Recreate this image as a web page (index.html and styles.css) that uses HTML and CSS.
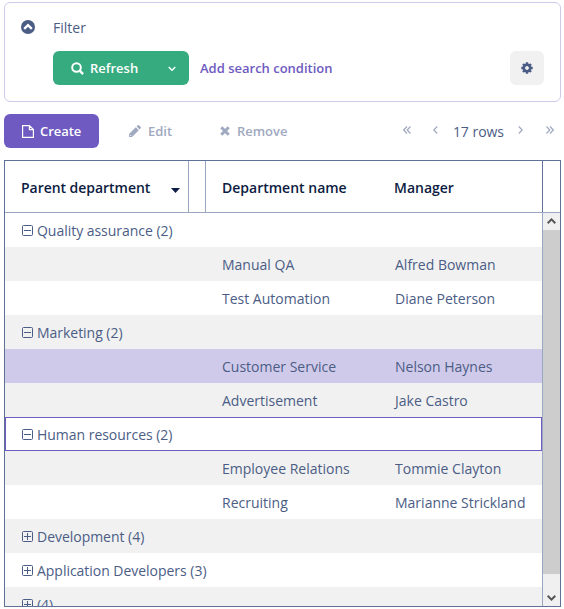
FILE: index.html
```html
<!DOCTYPE html>
<html lang="en">
<head>
<meta charset="utf-8">
<title>Departments</title>
<link rel="stylesheet" href="styles.css">
</head>
<body>
<svg class="defs" width="0" height="0">
  <symbol id="minus" viewBox="0 0 11 11"><rect x=".5" y=".5" width="10" height="10" rx="1"/><path d="M2 5.5h7"/></symbol>
  <symbol id="plus" viewBox="0 0 11 11"><rect x=".5" y=".5" width="10" height="10" rx="1"/><path d="M2 5.5h7M5.5 2v7"/></symbol>
</svg>
<section class="filter">
  <div class="filter-head">
    <svg class="collapse" width="14" height="14" viewBox="0 0 14 14"><circle cx="7" cy="7" r="7" fill="#4b5d85"/><path d="M3.200 8.900 7 5.100l3.800 3.800" fill="none" stroke="#fff" stroke-width="2.4"/></svg>
    <span class="filter-title">Filter</span>
  </div>
  <div class="filter-actions">
    <button class="refresh">
      <svg width="13" height="13" viewBox="0 0 13 13" fill="none" stroke="#fff" stroke-width="2"><circle cx="5.5" cy="5.5" r="4.3"/><path d="m8.6 8.6 3.5 3.5" stroke-width="2.3"/></svg>
      <span class="refresh-label">Refresh</span>
      <svg class="caret" width="8" height="6" viewBox="0 0 8 6" fill="none" stroke="#fff" stroke-width="1.3"><path d="m.7 1 3.3 3.3L7.300 1"/></svg>
    </button>
    <a class="add">Add search condition</a>
    <button class="gear"><svg width="12" height="12" viewBox="-6 -6 12 12" fill="none" stroke="#4b5d85"><circle r="3.2" stroke-width="2.6"/><path stroke-width="2.4" d="M0-5.700V-3.500M0 5.700V3.500M-5.700 0H-3.500M5.700 0H3.500M-4-4l1.500 1.500M4 4 2.500 2.500M-4 4l1.500-1.500M4-4 2.500-2.500"/></svg></button>
  </div>
</section>
<div class="toolbar">
  <button class="create"><svg width="12" height="13" viewBox="0 0 12 13" fill="none" stroke="#fff" stroke-width="1.2"><path d="M.6.6h6.800l4 4v7.800H.6zM7.400.6v4h4"/></svg>Create</button>
  <span class="tool edit"><svg width="12" height="12" viewBox="0 0 12 12" fill="#9fa9bf"><path d="M0 12V9l6.800-6.800 3 3L3 12zM7.600 1.400 8.700.3q.6-.5 1.200 0l1.800 1.800q.5.600 0 1.200l-1.100 1.100z"/><path d="M1 9.800 2.200 11" stroke="#fff" stroke-width=".9"/></svg>Edit</span>
  <span class="tool remove"><svg width="10" height="10" viewBox="0 0 10 10" fill="none" stroke="#9fa9bf" stroke-width="3"><path d="m1.300 1.300 7.400 7.400M8.700 1.300 1.300 8.700"/></svg>Remove</span>
  <div class="pager">
    <svg width="8" height="8" viewBox="0 0 8 8"><path d="M4 .5.700 4 4 7.500M7.500.5 4.200 4l3.300 3.500"/></svg>
    <svg class="prev" width="5" height="8" viewBox="0 0 5 8"><path d="M4.200.5.800 4l3.400 3.500"/></svg>
    <span class="count">17 rows</span>
    <svg class="next" width="5" height="8" viewBox="0 0 5 8"><path d="M.8.500 4.200 4 .8 7.500"/></svg>
    <svg width="8" height="8" viewBox="0 0 8 8"><path d="M.5.500 3.800 4 .5 7.500M4 .5 7.300 4 4 7.500"/></svg>
  </div>
</div>
<div class="table">
  <div class="thead">
    <div class="th parent">Parent department<svg width="9" height="5" viewBox="0 0 9 5"><path d="M0 0h9L4.500 5z" fill="#0d1c42"/></svg></div>
    <div class="th spacer"></div>
    <div class="th name">Department name</div>
    <div class="th manager">Manager</div>
    <div class="th corner"></div>
  </div>
  <div class="tbody">
    <div class="rows">
      <div class="row"><svg class="box"><use href="#minus"/></svg>Quality assurance (2)</div>
      <div class="row alt leaf"><span>Manual QA</span><span>Alfred Bowman</span></div>
      <div class="row leaf"><span>Test Automation</span><span>Diane Peterson</span></div>
      <div class="row alt"><svg class="box"><use href="#minus"/></svg>Marketing (2)</div>
      <div class="row leaf selected"><span>Customer Service</span><span>Nelson Haynes</span></div>
      <div class="row alt leaf"><span>Advertisement</span><span>Jake Castro</span></div>
      <div class="row focused"><svg class="box"><use href="#minus"/></svg>Human resources (2)</div>
      <div class="row alt leaf"><span>Employee Relations</span><span>Tommie Clayton</span></div>
      <div class="row leaf"><span>Recruiting</span><span>Marianne Strickland</span></div>
      <div class="row alt"><svg class="box"><use href="#plus"/></svg>Development (4)</div>
      <div class="row"><svg class="box"><use href="#plus"/></svg>Application Developers (3)</div>
      <div class="row alt"><svg class="box"><use href="#plus"/></svg>(4)</div>
    </div>
    <div class="scroll">
      <svg class="up" width="9" height="6" viewBox="0 0 9 6"><path d="M.7 5.200 4.500 1.400l3.800 3.800"/></svg>
      <div class="thumb"></div>
      <svg class="down" width="9" height="6" viewBox="0 0 9 6"><path d="m.7.800 3.800 3.800L8.300.8"/></svg>
    </div>
  </div>
</div>
</body>
</html>
```
FILE: styles.css
```css
* { box-sizing: border-box; }
body {
  margin: 0;
  padding: 2px 3px 0 4px;
  height: 609px;
  overflow: hidden;
  background: #fff;
  color: #4b5d85;
  font: 14px/20px "Open Sans", sans-serif;
}
svg { display: block; flex: none; }
.defs { position: absolute; }
button { border: 0; padding: 0; font: 600 13px/20px "Open Sans", sans-serif; display: flex; align-items: center; }
.filter { height: 100px; border: 1px solid #d0caea; border-radius: 6px; padding: 14px 16px 0; }
.filter-head { display: flex; align-items: center; height: 20px; margin-top: 1px; }
.collapse { margin: -2px 18px 0 0; }
.filter-actions { display: flex; align-items: center; margin: 13px 0 0 32px; }
.refresh { width: 136px; height: 34px; padding-left: 18px; border-radius: 6px; background: #37ab80; color: #fff; }
.refresh-label { margin-left: 6px; }
.caret { margin: 2px 13px 0 auto; }
.add { margin-left: 11px; color: #6e5ac0; font-weight: 600; font-size: 13px; }
.gear { width: 34px; height: 34px; margin-left: auto; border-radius: 6px; background: #f1f1f1; justify-content: center; }
.toolbar { display: flex; align-items: center; height: 34px; margin-top: 12px; letter-spacing: -.03px; }
.create { width: 95px; height: 34px; padding-left: 18px; gap: 6px; border-radius: 6px; background: #6e5ac0; color: #fff; letter-spacing: -.05px; }
.tool { display: flex; align-items: center; color: #9fa9bf; font-weight: 600; font-size: 13px; }
.edit { margin-left: 30px; gap: 7px; }
.remove { margin-left: 48px; gap: 7px; }
.pager { display: flex; align-items: center; margin: 0 7px 0 auto; }
.pager svg { fill: none; stroke: #9fa9bf; stroke-width: 1.2; margin-top: -2px; }
.pager .prev { margin-left: 22px; }
.count { margin: 1px 14px 0 15px; }
.pager .next { margin-right: 23px; }
.table { height: 447px; margin-top: 12px; border: 1px solid #5f7197; display: flex; flex-direction: column; }
.thead { display: grid; grid-template-columns: 184px 17px 171px 165px 18px; height: 52px; border-bottom: 1px solid #9aa7c3; color: #0d1c42; font-weight: 600; }
.th { display: flex; align-items: center; padding-bottom: 1px; padding-top: 3px; }
.parent { padding-left: 16px; border-right: 1px solid #9aa7c3; letter-spacing: -.04px; }
.parent svg { margin: 5px 8px 0 auto; }
.spacer { border-right: 1px solid #9aa7c3; }
.name { padding-left: 16px; }
.manager { padding-left: 17px; }
.corner { border-left: 1px solid #5f7197; }
.tbody { display: flex; flex: 1; min-height: 0; overflow: hidden; }
.rows { width: 537px; }
.row { display: flex; align-items: center; height: 34px; padding: 2px 0 0 17px; letter-spacing: -.03px; }
.box { width: 11px; height: 11px; margin: -1px 4px 0 0; fill: none; stroke: #4b5d85; stroke-width: 1; }
.alt { background: #f1f1f1; }
.leaf { display: grid; grid-template-columns: 173px 1fr; padding-left: 217px; letter-spacing: 0; }
.selected { background: #d0caea; }
.focused { border: 1px solid #6e5ac0; padding: 2px 0 0 16px; }
.scroll { width: 18px; border-left: 1px solid #9aa7c3; background: #f0f0f0; display: flex; flex-direction: column; align-items: center; padding: 5px 0; }
.scroll svg { fill: none; stroke: #555; stroke-width: 2; }
.thumb { width: 17px; height: 344px; margin-top: 6px; background: #cdcdcd; }
.down { margin-top: auto; }
```
